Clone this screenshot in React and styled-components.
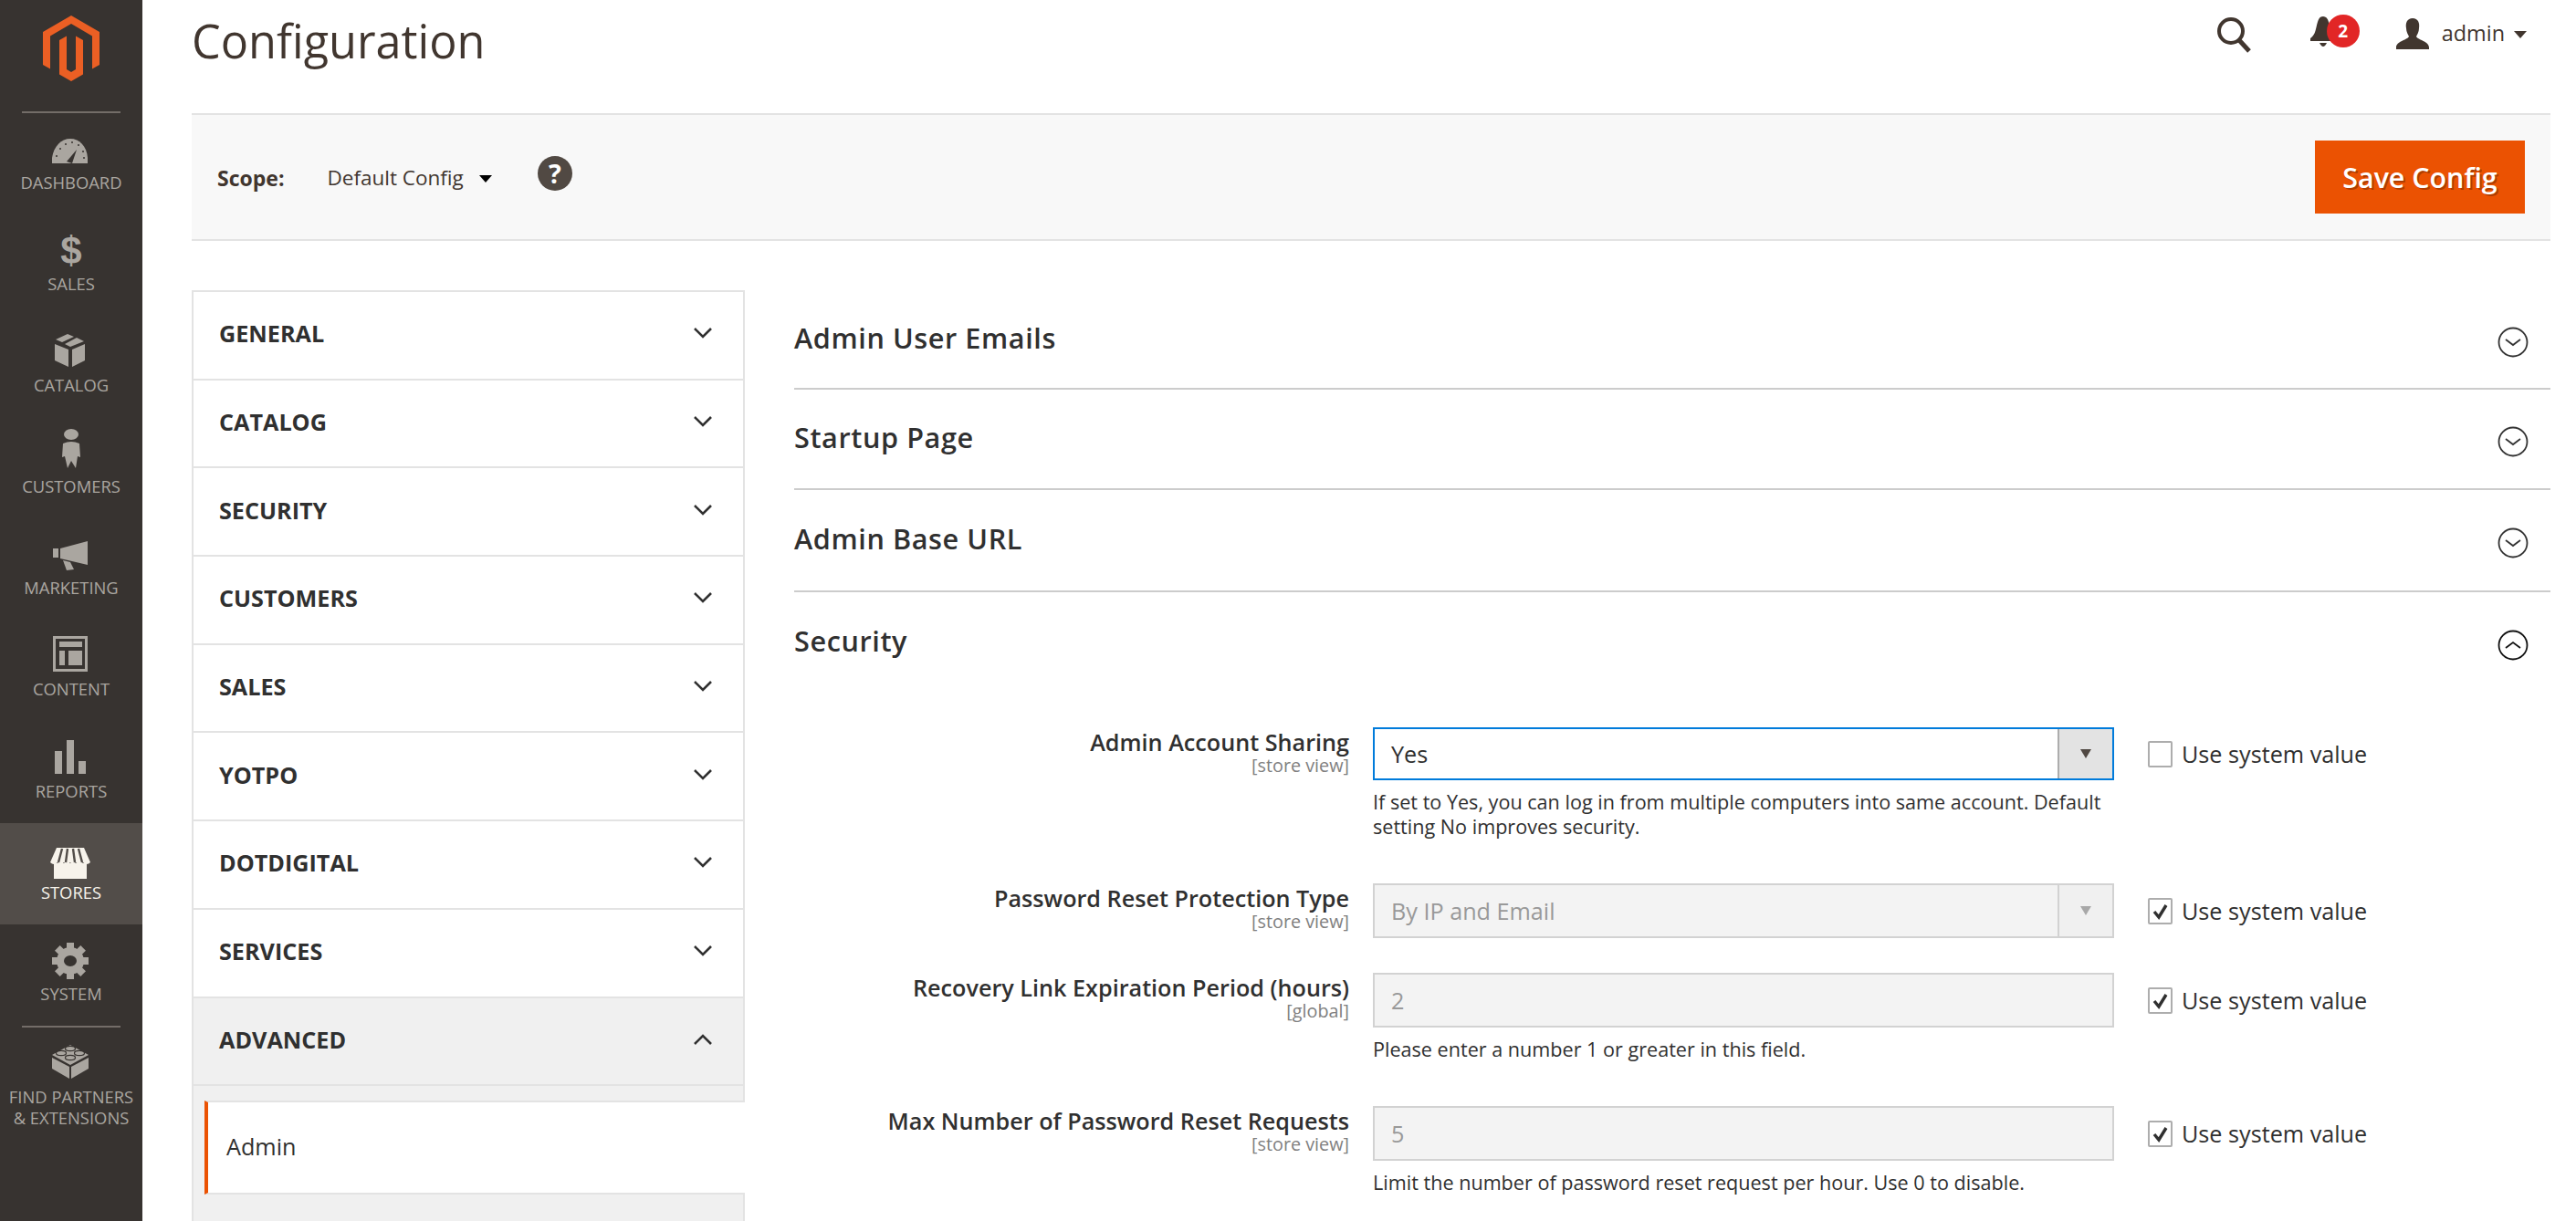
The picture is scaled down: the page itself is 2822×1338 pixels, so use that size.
import React from 'react';
import styled, { createGlobalStyle } from 'styled-components';

const GlobalStyle = createGlobalStyle`
    html, body {
        margin: 0;
        padding: 0;
        background: #fff;
    }
    body {
        font-family: "Open Sans", "Liberation Sans", sans-serif;
        color: #41362f;
        font-size: 25.2px;
    }
`;

const Page = styled.div`
    display: flex;
    width: 2822px;
    height: 1338px;
    overflow: hidden;
`;

/* ---------- sidebar ---------- */

const Sidebar = styled.nav`
    flex: 0 0 156px;
    background: #373330;
    display: flex;
    flex-direction: column;
`;

const LogoBox = styled.div`
    height: 122px;
    flex: none;
    box-sizing: border-box;
    padding-top: 17px;
    display: flex;
    justify-content: center;
`;

const Rule = styled.div`
    flex: none;
    height: 2px;
    margin: 0 24px;
    background: #736d68;
`;

const NavItem = styled.a`
    flex: none;
    display: flex;
    flex-direction: column;
    align-items: center;
    height: 111.1px;
    box-sizing: border-box;
    padding-top: 16px;
    background: ${p => (p.$active ? '#524d49' : 'transparent')};
    color: ${p => (p.$active ? '#f7f3eb' : '#aaa6a0')};
`;

const NavIcon = styled.svg`
    width: 48px;
    height: 48px;
    flex: none;
    overflow: visible;
    fill: currentColor;
`;

const DollarGlyph = styled.span`
    display: block;
    height: 48px;
    flex: none;
    font: bold 42px/48px "Liberation Sans", sans-serif;
`;

const NavLabel = styled.span`
    font-size: 18.4px;
    line-height: 23px;
    text-transform: uppercase;
    text-align: center;
    white-space: nowrap;
`;

/* ---------- main ---------- */

const Main = styled.main`
    flex: 1;
    min-width: 0;
    padding: 0 28px 0 54px;
`;

const PageHead = styled.header`
    height: 124px;
    display: flex;
    justify-content: space-between;
    box-sizing: border-box;
`;

const Title = styled.h1`
    margin: 13px 0 0 0;
    font-size: 50.4px;
    line-height: 64px;
    font-weight: 400;
    color: #41362f;
`;

const HeadActions = styled.div`
    display: flex;
    align-items: flex-start;
    position: relative;
    width: 400px;
    height: 70px;
    justify-content: flex-end;
    padding-top: 14px;
    box-sizing: border-box;
`;

const SearchIcon = styled.svg`
    width: 40px;
    height: 44px;
    margin-right: 62px;
    margin-top: 2px;
`;

const BellWrap = styled.div`
    position: relative;
    width: 40px;
    height: 44px;
    margin-right: 55px;
`;

const Badge = styled.span`
    position: absolute;
    left: 19px;
    top: 2px;
    width: 36px;
    height: 36px;
    border-radius: 50%;
    background: #e22626;
    color: #fff;
    font-size: 19px;
    font-weight: 700;
    line-height: 36px;
    text-align: center;
`;

const UserIcon = styled.svg`
    width: 36px;
    height: 34px;
    margin-top: 6px;
    margin-right: 14px;
`;

const UserName = styled.span`
    font-size: 23.4px;
    line-height: 44px;
    color: #41362f;
`;

const Caret = styled.span`
    display: inline-block;
    width: 0;
    height: 0;
    border-left: 7px solid transparent;
    border-right: 7px solid transparent;
    border-top: 8px solid ${p => p.$color || '#41362f'};
`;

const UserCaret = styled(Caret)`
    margin: 20px 26px 0 10px;
`;

const ScopeBar = styled.section`
    height: 140px;
    box-sizing: border-box;
    background: #f8f8f8;
    border-top: 2px solid #e3e3e3;
    border-bottom: 2px solid #e3e3e3;
    display: flex;
    align-items: center;
    padding: 0 28px 0 28px;
`;

const ScopeLabel = styled.span`
    font-weight: 700;
    font-size: 23px;
    margin-right: 47px;
    margin-top: 2px;
    color: #41362f;
`;

const ScopeValue = styled.span`
    font-size: 22.5px;
    margin-top: 0;
    color: #41362f;
`;

const ScopeCaret = styled(Caret)`
    margin: 4px 50px 0 17px;
`;

const HelpBadge = styled.span`
    width: 38px;
    height: 38px;
    margin-top: -8px;
    border-radius: 50%;
    background: #514943;
    color: #fff;
    font-size: 29px;
    font-weight: 700;
    line-height: 38px;
    text-align: center;
`;

const SaveButton = styled.button`
    margin-left: auto;
    width: 230px;
    height: 80px;
    border: 0;
    background: #eb5202;
    color: #fff;
    font-family: inherit;
    font-size: 30.4px;
    font-weight: 600;
    text-shadow: 2px 2px 0 rgba(0, 0, 0, 0.25);
`;

const Columns = styled.div`
    display: flex;
    gap: 54px;
    margin-top: 54px;
`;

/* ---------- config menu ---------- */

const ConfigMenu = styled.aside`
    flex: 0 0 606px;
    box-sizing: border-box;
    height: 1040px;
    border-left: 2px solid #e3e3e3;
    border-right: 2px solid #e3e3e3;
    border-top: 2px solid #e3e3e3;
    background: #f0f0f0;
`;

const MenuRow = styled.div`
    height: 96.7px;
    box-sizing: border-box;
    border-bottom: 2px solid #e3e3e3;
    background: ${p => (p.$open ? '#f0f0f0' : '#fff')};
    display: flex;
    align-items: center;
    justify-content: space-between;
    padding: 0 33px 4px 28px;
    color: #303030;
    font-size: 25.2px;
    font-weight: 700;
    text-transform: uppercase;
`;

const MenuChevron = styled.svg`
    width: 22px;
    height: 14px;
    fill: none;
    stroke: #303030;
    stroke-width: 2.6;
`;

const SubItem = styled.div`
    margin: 16px -2px 0 12px;
    height: 103px;
    box-sizing: border-box;
    background: #fff;
    border-top: 2px solid #e3e3e3;
    border-bottom: 2px solid #e3e3e3;
    border-left: 4px solid #eb5202;
    padding: 0 0 4px 20px;
    display: flex;
    align-items: center;
    color: #303030;
    font-size: 25.2px;
`;

/* ---------- config sections ---------- */

const Sections = styled.div`
    flex: 1;
    min-width: 0;
    margin-top: 1px;
`;

const SectionHead = styled.div`
    height: ${p => p.$h}px;
    box-sizing: border-box;
    display: flex;
    align-items: center;
    justify-content: space-between;
    border-bottom: ${p => (p.$open ? '0' : '2px solid #ccc')};
    padding: 0 24px 4px 0;
    font-size: 30.6px;
    font-weight: 600;
    letter-spacing: 0.6px;
    color: #303030;
`;

const CircleIcon = styled.svg`
    width: 34px;
    height: 34px;
    fill: none;
    stroke: ${p => (p.$open ? '#111' : '#333')};
    stroke-width: 1.8;
    margin-top: 10px;
`;

const Form = styled.div`
    margin-top: 38px;
`;

const FieldRow = styled.div`
    display: grid;
    grid-template-columns: 608px 812px auto;
    column-gap: 26px;
    margin-bottom: 38px;
    align-items: start;
`;

const FieldLabel = styled.div`
    text-align: right;
`;

const LabelText = styled.div`
    font-size: 25.2px;
    font-weight: 600;
    line-height: 32px;
    color: #303030;
`;

const ScopeHint = styled.div`
    font-size: 19.8px;
    line-height: 20px;
    color: #808080;
`;

const Control = styled.div`
    height: ${p => (p.$focus ? 58 : 60)}px;
    box-sizing: border-box;
    border: 2px solid ${p => (p.$focus ? '#007bdb' : '#d2d2d2')};
    background: ${p => (p.$focus ? '#fff' : '#f3f3f3')};
    color: ${p => (p.$focus ? '#303030' : '#999')};
    display: flex;
    align-items: center;
    font-size: 25.2px;
    padding-left: 18px;
`;

const SelectValue = styled.span`
    flex: 1;
`;

const SelectAddon = styled.span`
    width: 60px;
    align-self: stretch;
    display: flex;
    align-items: center;
    justify-content: center;
    box-sizing: border-box;
    border-left: 2px solid ${p => (p.$focus ? '#adadad' : '#d2d2d2')};
    background: ${p => (p.$focus ? '#e3e3e3' : '#f0f0f0')};
`;

const Note = styled.div`
    margin: 10px 0 11px;
    font-size: 21.6px;
    line-height: 27px;
    color: #303030;
`;

const SystemValue = styled.label`
    display: flex;
    align-items: center;
    height: ${p => (p.$focus ? 58 : 60)}px;
    margin-left: 11px;
    gap: 10px;
    font-size: 25.2px;
    color: #303030;
    white-space: nowrap;
`;

const Checkbox = styled.span`
    width: 27px;
    height: 29px;
    box-sizing: border-box;
    border: 2px solid #adadad;
    border-radius: 2px;
    background: #fff;
    display: flex;
    align-items: center;
    justify-content: center;
`;

const CheckMark = styled.svg`
    width: 19px;
    height: 19px;
    fill: none;
    stroke: #303030;
    stroke-width: 3.4;
`;

/* ---------- drawn icons ---------- */

const BG = '#373330';

const GEAR_ANGLES = [0, 45, 90, 135, 180, 225, 270, 315];

const icons = {
    dashboard: (
        <>
            <path d="M3 39V33C5 20 13 12 23 12S41 20 42 33V39Z" />
            {[[8, 31], [12, 23], [18, 18], [25, 16], [32, 19], [37, 26], [38, 33]].map(([cx, cy]) => (
                <circle key={cx} cx={cx} cy={cy} r="1" fill={BG} />
            ))}
            <path d="M19 37L30 24L25 39Z" fill={BG} />
        </>
    ),
    catalog: (
        <>
            <path d="M6 15L21 21V40L6 33Z" />
            <path d="M25 21L39 15V33L25 40Z" />
            <path d="M7 10L20 4L27 7L14 13Z" />
            <path d="M17 15L30 8L38 12L23 18Z" />
        </>
    ),
    customers: (
        <>
            <ellipse cx="24" cy="3" rx="8" ry="6" />
            <path d="M15 13Q24 9 33 13L34 28L31 27L29 40L24 32L20 40L17 27L14 28Z" />
        </>
    ),
    marketing: (
        <>
            <path d="M4 17H10V27H4Z" />
            <path d="M12 17L42 9V35L12 28Z" />
            <path d="M15 30L23 32L27 40L19 41Z" />
        </>
    ),
    content: (
        <>
            <path
                fillRule="evenodd"
                d="M4 2H42V41H4ZM7 5V38H39V5Z"
            />
            <path d="M11 8H36V14H11ZM11 18H17V34H11ZM21 18H36V34H21Z" />
        </>
    ),
    reports: <path d="M6 16H14V41H6ZM19 4H27V41H19ZM32 27H40V41H32Z" />,
    stores: (
        <>
            <path d="M5 28H41V45H5Z" />
            <path d="M8 11H38L45 27Q41 31 37 27Q33 31 29 27Q25 31 23 27Q19 31 16 27Q12 31 9 27Q5 31 1 27Z" />
            <path d="M14 12L10 27M20 12L18 27M26 12L28 27M32 12L36 27" stroke="#524d49" strokeWidth="2.4" fill="none" />
        </>
    ),
    system: (
        <>
            {GEAR_ANGLES.map(a => (
                <rect key={a} x="19" y="4" width="8" height="10" transform={`rotate(${a} 23 24)`} />
            ))}
            <circle cx="23" cy="24" r="15" />
            <ellipse cx="23" cy="24" rx="7" ry="6" fill={BG} />
        </>
    ),
    partners: (
        <>
            <path d="M23 3L43 14L23 25L3 14Z" />
            <path d="M3 17L22 27V40L3 29Z" />
            <path d="M24 27L43 17V29L24 40Z" />
            <g fill="none" stroke={BG} strokeWidth="1.2">
                <ellipse cx="23" cy="7" rx="5.5" ry="2.6" />
                <ellipse cx="13" cy="12" rx="5.5" ry="2.6" />
                <ellipse cx="33" cy="12" rx="5.5" ry="2.6" />
                <ellipse cx="23" cy="17" rx="5.5" ry="2.6" />
            </g>
        </>
    ),
};

const navItems = [
    { key: 'dashboard', label: 'Dashboard' },
    { key: 'sales', label: 'Sales' },
    { key: 'catalog', label: 'Catalog' },
    { key: 'customers', label: 'Customers' },
    { key: 'marketing', label: 'Marketing' },
    { key: 'content', label: 'Content' },
    { key: 'reports', label: 'Reports' },
    { key: 'stores', label: 'Stores', active: true },
    { key: 'system', label: 'System' },
];

const menuItems = ['General', 'Catalog', 'Security', 'Customers', 'Sales', 'Yotpo', 'dotdigital', 'Services'];

const Arrow = ({ focus }) => (
    <svg width="12" height="10" viewBox="0 0 12 10">
        <path d="M0 0H12L6 10Z" fill={focus ? '#514943' : '#a8a8a8'} />
    </svg>
);

const SectionChevron = ({ open }) => (
    <CircleIcon viewBox="0 0 34 34" $open={open}>
        <circle cx="17" cy="17" r="15.5" />
        <path d={open ? 'M9 20L17 14L25 20' : 'M9 14L17 20L25 14'} />
    </CircleIcon>
);

const UseSystem = ({ checked, focus }) => (
    <SystemValue $focus={focus}>
        <Checkbox>
            {checked && (
                <CheckMark viewBox="0 0 19 19">
                    <path d="M3 10L8 16L16 3" />
                </CheckMark>
            )}
        </Checkbox>
        Use system value
    </SystemValue>
);

const App = () => (
    <Page>
        <GlobalStyle />
        <Sidebar>
            <LogoBox>
                <svg width="62" height="72" viewBox="0 0 62 72" fill="#eb5f24">
                    <path d="M31 0L62 18V54L54 58.5V22.5L31 9L8 22.5V58.5L0 54V18Z" />
                    <path d="M31 72L18 64.5V27L26 22.5V59L31 62L36 59V22.5L44 27V64.5Z" />
                </svg>
            </LogoBox>
            <Rule />
            {navItems.map(item => (
                <NavItem key={item.key} $active={item.active}>
                    {item.key === 'sales' ? (
                        <DollarGlyph>$</DollarGlyph>
                    ) : (
                        <NavIcon viewBox="0 0 48 48">{icons[item.key]}</NavIcon>
                    )}
                    <NavLabel>{item.label}</NavLabel>
                </NavItem>
            ))}
            <Rule />
            <NavItem>
                <NavIcon viewBox="0 0 48 48">{icons.partners}</NavIcon>
                <NavLabel>
                    Find Partners
                    <br />
                    &amp; Extensions
                </NavLabel>
            </NavItem>
        </Sidebar>

        <Main>
            <PageHead>
                <Title>Configuration</Title>
                <HeadActions>
                    <SearchIcon viewBox="0 0 40 44" fill="none" stroke="#41362f">
                        <circle cx="16" cy="18" r="13" strokeWidth="4" />
                        <path d="M25 28L36 40" strokeWidth="5" />
                    </SearchIcon>
                    <BellWrap>
                        <svg width="30" height="38" viewBox="0 0 30 38" fill="#41362f">
                            <path d="M15 4C18 4 20 6 21 10C23 16 23 24 29 28V31H1V28C7 24 7 16 9 10C10 6 12 4 15 4Z" />
                            <path d="M11 33H19Q17 37 15 37Q13 37 11 33Z" />
                        </svg>
                        <Badge>2</Badge>
                    </BellWrap>
                    <UserIcon viewBox="0 0 36 34" fill="#41362f">
                        <path d="M18 0C24 0 26 5 25 11C25 15 23 18 22 20C24 24 36 25 36 32V34H0V32C0 25 12 24 14 20C13 18 11 15 11 11C10 5 12 0 18 0Z" />
                    </UserIcon>
                    <UserName>admin</UserName>
                    <UserCaret />
                </HeadActions>
            </PageHead>

            <ScopeBar>
                <ScopeLabel>Scope:</ScopeLabel>
                <ScopeValue>Default Config</ScopeValue>
                <ScopeCaret $color="#000" />
                <HelpBadge>?</HelpBadge>
                <SaveButton>Save Config</SaveButton>
            </ScopeBar>

            <Columns>
                <ConfigMenu>
                    {menuItems.map(name => (
                        <MenuRow key={name}>
                            {name}
                            <MenuChevron viewBox="0 0 22 14">
                                <path d="M2 2L11 11L20 2" />
                            </MenuChevron>
                        </MenuRow>
                    ))}
                    <MenuRow $open>
                        Advanced
                        <MenuChevron viewBox="0 0 22 14">
                            <path d="M2 12L11 3L20 12" />
                        </MenuChevron>
                    </MenuRow>
                    <SubItem>Admin</SubItem>
                </ConfigMenu>

                <Sections>
                    <SectionHead $h={108}>
                        Admin User Emails
                        <SectionChevron />
                    </SectionHead>
                    <SectionHead $h={110}>
                        Startup Page
                        <SectionChevron />
                    </SectionHead>
                    <SectionHead $h={112}>
                        Admin Base URL
                        <SectionChevron />
                    </SectionHead>
                    <SectionHead $h={110} $open>
                        Security
                        <SectionChevron open />
                    </SectionHead>

                    <Form>
                        <FieldRow>
                            <FieldLabel>
                                <LabelText>Admin Account Sharing</LabelText>
                                <ScopeHint>[store view]</ScopeHint>
                            </FieldLabel>
                            <div>
                                <Control $focus>
                                    <SelectValue>Yes</SelectValue>
                                    <SelectAddon $focus>
                                        <Arrow focus />
                                    </SelectAddon>
                                </Control>
                                <Note>
                                    If set to Yes, you can log in from multiple computers into same account. Default
                                    setting No improves security.
                                </Note>
                            </div>
                            <UseSystem focus />
                        </FieldRow>

                        <FieldRow>
                            <FieldLabel>
                                <LabelText>Password Reset Protection Type</LabelText>
                                <ScopeHint>[store view]</ScopeHint>
                            </FieldLabel>
                            <Control>
                                <SelectValue>By IP and Email</SelectValue>
                                <SelectAddon>
                                    <Arrow />
                                </SelectAddon>
                            </Control>
                            <UseSystem checked />
                        </FieldRow>

                        <FieldRow>
                            <FieldLabel>
                                <LabelText>Recovery Link Expiration Period (hours)</LabelText>
                                <ScopeHint>[global]</ScopeHint>
                            </FieldLabel>
                            <div>
                                <Control>2</Control>
                                <Note>Please enter a number 1 or greater in this field.</Note>
                            </div>
                            <UseSystem checked />
                        </FieldRow>

                        <FieldRow>
                            <FieldLabel>
                                <LabelText>Max Number of Password Reset Requests</LabelText>
                                <ScopeHint>[store view]</ScopeHint>
                            </FieldLabel>
                            <div>
                                <Control>5</Control>
                                <Note>Limit the number of password reset request per hour. Use 0 to disable.</Note>
                            </div>
                            <UseSystem checked />
                        </FieldRow>
                    </Form>
                </Sections>
            </Columns>
        </Main>
    </Page>
);

export default App;
